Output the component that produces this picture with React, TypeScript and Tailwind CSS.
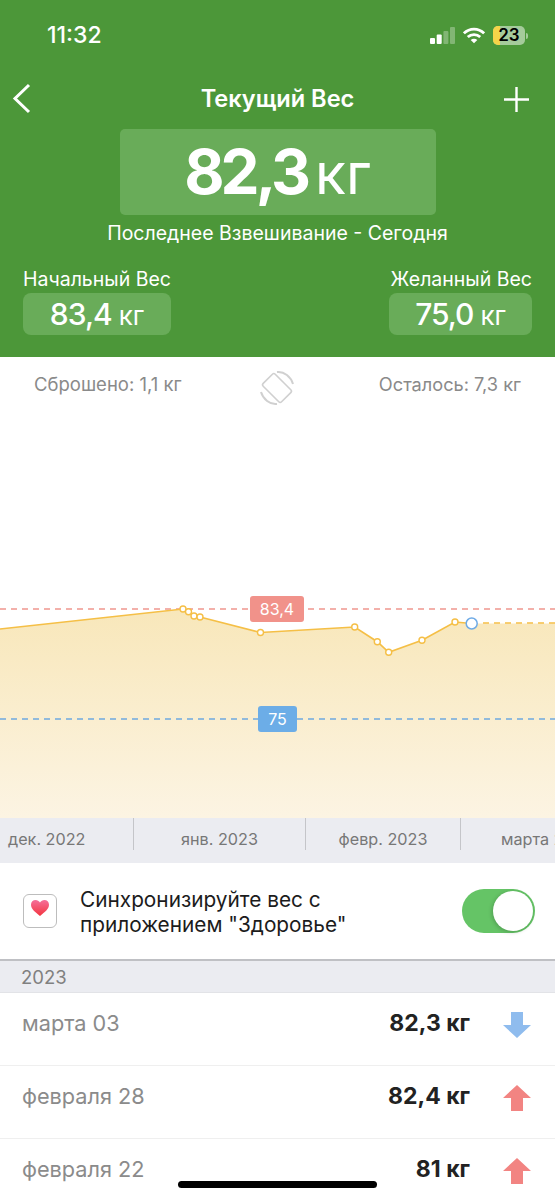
const points: [number, number][] = [
  [0, 629],
  [183, 609],
  [188.5, 611.7],
  [194, 616],
  [200, 617],
  [260.5, 632.5],
  [354.7, 627],
  [377.3, 641.7],
  [388.7, 652.3],
  [422, 640.3],
  [455, 622],
  [471.7, 623.5],
]

const CHART_TOP = 357
const chartPoints = points.map(([x, y]) => `${x},${y - CHART_TOP}`).join(' ')

const rows = [
  { date: 'марта 03', weight: '82,3 кг', down: true },
  { date: 'февраля 28', weight: '82,4 кг', down: false },
  { date: 'февраля 22', weight: '81 кг', down: false },
]

function StatusBar() {
  return (
    <div className="flex h-[70px] items-center justify-between pl-[47px] pr-[27px] pt-[1px]">
      <span className="text-[23px] font-medium text-white">11:32</span>
      <div className="flex items-center gap-[8px]">
        <svg width="25" height="17" viewBox="0 0 25 17">
          <rect x="0" y="11" width="5" height="6" rx="1" fill="#fff" />
          <rect x="6.7" y="7.5" width="5" height="9.5" rx="1" fill="#fff" />
          <rect x="13.4" y="4" width="5" height="13" rx="1" fill="#fff" fillOpacity="0.3" />
          <rect x="20" y="0" width="5" height="17" rx="1" fill="#fff" fillOpacity="0.3" />
        </svg>
        <svg width="22" height="17" viewBox="0 0 24 17" fill="none" stroke="#fff" strokeWidth="3">
          <path d="M1 6.2 C7.2 0 16.8 0 23 6.2" />
          <path d="M5.2 10.2 C9 6.6 15 6.6 18.8 10.2" />
          <path d="M12 17 L8.4 13.4 C10.4 11.6 13.6 11.6 15.6 13.4 Z" fill="#fff" stroke="none" />
        </svg>
        <div className="flex items-center gap-[1px]">
          <div className="relative h-[19px] w-[32px] overflow-hidden rounded-[5px] bg-[#a5cb9b]">
            <div className="absolute bottom-0 left-0 top-0 w-[7px] bg-[#f6d449]" />
            <span className="absolute inset-0 text-center text-[17px] font-semibold leading-[19px] text-black">23</span>
          </div>
          <div className="h-[6px] w-[2px] rounded-r-sm bg-[#a5cb9b]" />
        </div>
      </div>
    </div>
  )
}

function SmallStat({ label, value, align, width }: { label: string; value: string; align: string; width: string }) {
  return (
    <div className={`flex flex-col ${align}`}>
      <span className="text-[19.5px] leading-[24px] text-white">{label}</span>
      <div className={`mt-[2px] flex h-[42px] items-baseline justify-center rounded-lg bg-[#69ac59] pt-[2px] text-white ${width}`}>
        <span className="text-[30px] font-medium leading-[38px] tracking-[-1px]">{value}</span>
        <span className="ml-[7px] text-[26px] font-normal leading-[38px]">кг</span>
      </div>
    </div>
  )
}

function Header() {
  return (
    <header className="h-[357px] bg-[#4c9739]">
      <StatusBar />
      <div className="flex h-[56px] items-center justify-between pt-[2px]">
        <div className="w-[66px] pl-[11px]">
          <svg width="20" height="32" viewBox="0 0 20 32" fill="none" stroke="#fff" strokeWidth="3">
            <path d="M18 2 L4 15.5 L18 29" />
          </svg>
        </div>
        <h1 className="text-[23.6px] font-semibold text-white">Текущий Вес</h1>
        <div className="flex w-[66px] justify-end pr-[26px]">
          <svg width="25" height="25" viewBox="0 0 25 25" stroke="#fff" strokeWidth="2.4">
            <path d="M12.5 0 V25 M0 12.5 H25" />
          </svg>
        </div>
      </div>
      <div className="mx-auto mt-[3px] flex h-[86px] w-[316px] items-baseline justify-center rounded-[5px] bg-[#69ac59] text-white">
        <span className="text-[62px] font-bold leading-[86px] tracking-[-4px]">82,3</span>
        <span className="ml-[8px] text-[57px] font-normal leading-[86px]">кг</span>
      </div>
      <p className="mt-[6px] text-center text-[19.5px] leading-[24px] text-white">Последнее Взвешивание - Сегодня</p>
      <div className="mt-[22px] flex justify-between pl-[23px] pr-[23px]">
        <SmallStat label="Начальный Вес" value="83,4" align="items-start" width="w-[148px]" />
        <SmallStat label="Желанный Вес" value="75,0" align="items-end" width="w-[143px]" />
      </div>
    </header>
  )
}

function Chart() {
  return (
    <section className="relative h-[461px] bg-white">
      <svg className="absolute inset-0" width="555" height="461" viewBox="0 0 555 461">
        <defs>
          <linearGradient id="area" x1="0" y1="0" x2="0" y2="1">
            <stop offset="0" stopColor="#f8e7ba" />
            <stop offset="1" stopColor="#fcf4e3" />
          </linearGradient>
        </defs>
        <polygon points={`${chartPoints} 555,266.5 555,461 0,461`} fill="url(#area)" />
        <line x1="0" y1="252" x2="555" y2="252" stroke="#f0968e" strokeWidth="1.7" strokeDasharray="6 5" />
        <line x1="0" y1="362" x2="555" y2="362" stroke="#6fa9e0" strokeWidth="1.7" strokeDasharray="6 5" />
        <polyline points={chartPoints} fill="none" stroke="#f5bf46" strokeWidth="1.7" />
        <line x1="483" y1="266" x2="555" y2="266" stroke="#f5bf46" strokeWidth="1.5" strokeDasharray="6 5" />
        {points.slice(1, -1).map(([x, y]) => (
          <circle key={x} cx={x} cy={y - CHART_TOP} r="3" fill="#fff" stroke="#f5bf46" strokeWidth="1.4" />
        ))}
        <circle cx="471.7" cy="266.5" r="5.5" fill="#fff" stroke="#6fabe6" strokeWidth="1.5" />
      </svg>

      <div className="relative flex items-start justify-between pl-[34px] pr-[34px] pt-[15px] leading-[24px] text-[#8a8a8a]">
        <span className="text-[18.5px]">Сброшено: 1,1 кг</span>
        <svg className="absolute left-[260px] top-[13px]" width="34" height="36" viewBox="0 0 34 36" fill="none">
          <rect x="-8.5" y="-13" width="17" height="26" rx="2" transform="translate(17 18) rotate(-45)" stroke="#d0d0d0" strokeWidth="1.6" />
          <path d="M17 2 C24 1 31 7 33 14" stroke="#d0d0d0" strokeWidth="2" />
          <path d="M17 34 C10 35 3 29 1 22" stroke="#d0d0d0" strokeWidth="2" />
        </svg>
        <span className="text-[18.2px]">Осталось: 7,3 кг</span>
      </div>

      <div className="absolute left-[250px] top-[239px] flex h-[26px] w-[54px] items-center justify-center rounded-[3px] bg-[#f1928a] text-[16px] text-white">
        83,4
      </div>
      <div className="absolute left-[258px] top-[349px] flex h-[26px] w-[39px] items-center justify-center rounded-[3px] bg-[#6cade7] text-[16px] text-white">
        75
      </div>
    </section>
  )
}

function Axis() {
  return (
    <div className="flex h-[45px] items-start overflow-hidden bg-[#ebecf1] text-[16.2px] text-[#777777]">
      <div className="flex h-[32px] w-[134px] shrink-0 items-center border-r border-[#c4c5c9] pl-[8px] pt-[10px]">дек. 2022</div>
      <div className="flex h-[32px] w-[172px] shrink-0 items-center justify-center border-r border-[#c4c5c9] pt-[10px]">янв. 2023</div>
      <div className="flex h-[32px] w-[155px] shrink-0 items-center justify-center border-r border-[#c4c5c9] pt-[10px]">февр. 2023</div>
      <div className="flex h-[32px] shrink-0 items-center whitespace-nowrap pl-[40px] pt-[10px]">марта 2023</div>
    </div>
  )
}

function HealthSync() {
  return (
    <div className="flex h-[98px] items-center justify-between border-b-2 border-[#bfc0c4] pl-[23px] pr-[20px]">
      <div className="flex items-center">
        <div className="flex h-[34px] w-[34px] items-start justify-center rounded-[6px] border border-[#bdbdbd] pt-[5px]">
          <svg width="18" height="16" viewBox="0 0 18 16">
            <defs>
              <linearGradient id="heart" x1="0" y1="0" x2="0" y2="1">
                <stop offset="0" stopColor="#f56f9a" />
                <stop offset="1" stopColor="#f3353f" />
              </linearGradient>
            </defs>
            <path d="M9 16 C4 12 0 9 0 4.8 C0 2 2 0 4.6 0 C6.4 0 8 1 9 2.6 C10 1 11.6 0 13.4 0 C16 0 18 2 18 4.8 C18 9 14 12 9 16 Z" fill="url(#heart)" />
          </svg>
        </div>
        <p className="ml-[23px] pt-[1px] text-[20.8px] leading-[25px] text-[#1c1c1c]">
          Синхронизируйте вес с
          <br />
          приложением "Здоровье"
        </p>
      </div>
      <div className="flex h-[44px] w-[73px] items-center justify-end rounded-full bg-[#65c466] pr-[2px]">
        <div className="h-[40px] w-[40px] rounded-full bg-white shadow-[-1px_1px_4px_rgba(0,0,0,0.2)]" />
      </div>
    </div>
  )
}

function ArrowIcon({ down }: { down: boolean }) {
  return (
    <svg width="28" height="26" viewBox="0 0 28 26" className={down ? 'rotate-180' : ''}>
      <path d="M14 0 L28 13 L20 13 L20 26 L8 26 L8 13 L0 13 Z" fill={down ? '#8fbcee' : '#f28482'} />
    </svg>
  )
}

function History() {
  return (
    <div className="bg-white">
      <div className="flex h-[32px] items-center border-b border-[#e2e3e7] bg-[#ebecf1] pl-[21px] pt-[2px] text-[18.5px] text-[#808080]">2023</div>
      {rows.map((row) => (
        <div key={row.date} className="flex h-[73px] items-center justify-between border-b border-[#efefef] pb-[12px] pl-[22px] pr-[24px]">
          <span className="text-[21.7px] text-[#8b8b8b]">{row.date}</span>
          <div className="flex items-center">
            <span className="text-[23px] font-bold text-[#222222]">{row.weight}</span>
            <div className="ml-[33px] mt-[4px]">
              <ArrowIcon down={row.down} />
            </div>
          </div>
        </div>
      ))}
    </div>
  )
}

export default function App() {
  return (
    <div className="relative h-[1200px] w-[555px] overflow-hidden bg-white font-['Inter',sans-serif]">
      <Header />
      <Chart />
      <Axis />
      <HealthSync />
      <History />
      {/* Home indicator */}
      <div className="absolute bottom-[12px] left-[178px] h-[7px] w-[199px] rounded-full bg-black" />
    </div>
  )
}
